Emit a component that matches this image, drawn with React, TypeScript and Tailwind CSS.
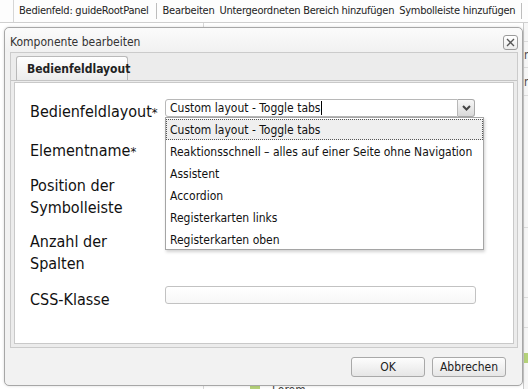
import React from 'react';

const font = { fontFamily: '"DejaVu Sans Condensed", "DejaVu Sans", sans-serif' };

const options = [
  'Custom layout - Toggle tabs',
  'Reaktionsschnell – alles auf einer Seite ohne Navigation',
  'Assistent',
  'Accordion',
  'Registerkarten links',
  'Registerkarten oben',
];

function Backdrop() {
  return (
    <div className="flex flex-col h-full">
      {/* Top toolbar of the page */}
      <div className="h-[23px] shrink-0 flex items-center border-b border-[#cfcfcf] bg-[#fdfdfd] text-[11px] tracking-[-0.25px] text-[#222] whitespace-nowrap">
        <div className="ml-[13px] h-[22px] border-l border-[#d6d6d6]" />
        <span className="ml-[5px]">Bedienfeld: guideRootPanel</span>
        <div className="ml-[7px] h-[16px] border-l border-[#bdbdbd]" />
        <span className="ml-[6px]">Bearbeiten</span>
        <span className="ml-[5px]">Untergeordneten Bereich hinzufügen</span>
        <span className="ml-[5px]">Symbolleiste hinzufügen</span>
        <div className="ml-[6px] h-[16px] border-l border-[#bdbdbd]" />
      </div>
      <div className="flex flex-1 min-h-0">
        <div className="w-[204px] shrink-0 border-r border-[#d8d8d8] bg-white" />
        <div className="flex-1 relative bg-white">
          <div className="absolute left-[46px] bottom-0 w-[10px] h-[4px] bg-[#b5d27a]" />
          <span className="absolute left-[68px] bottom-[-10px] text-[12px] text-[#444]">Lorem</span>
        </div>
        <div className="w-[5px] shrink-0 border-l border-[#c9c9c9] bg-[#f6f6f6] overflow-hidden text-[12px] text-[#4a4a4a] flex flex-col">
          <div className="h-[19px] border-b border-[#dcdcdc]" />
          <div className="h-[26px] leading-[26px] border-b border-[#dcdcdc]">m</div>
          <div className="h-[28px] leading-[28px] border-b border-[#dcdcdc]">m</div>
          <div className="h-[132px] border-b border-[#dcdcdc]" />
          <div className="h-[70px] border-b border-[#dcdcdc]" />
          <div className="h-[30px] border-b border-[#dcdcdc]" />
          <div className="h-[25px]" />
          <div className="h-[10px] bg-[#b5d27a]" />
        </div>
      </div>
    </div>
  );
}

function Combo() {
  return (
    <div className="relative flex w-[310px] h-[18px]">
      <div className="flex-1 flex items-center rounded-l-[3px] border border-[#b8b8b8] bg-white pl-[4px] text-[12px] text-[#111]">
        <span>Custom layout - Toggle tabs</span>
        <span className="w-px h-[14px] bg-black" />
      </div>
      <div className="w-[17px] flex items-center justify-center rounded-r-[3px] border border-l-0 border-[#a9a9a9] bg-gradient-to-b from-[#f7f7f7] to-[#d9d9d9]">
        <svg width="9" height="6" viewBox="0 0 9 6">
          <path d="M1 1 L4.5 4.5 L8 1" fill="none" stroke="#444" strokeWidth="2" />
        </svg>
      </div>
      {/* open list */}
      <div className="absolute left-0 top-[18px] w-[319px] h-[133px] border border-[#a5a5a5] bg-white shadow-[1px_2px_3px_rgba(0,0,0,0.18)] pt-px z-10">
        {options.map((o, i) => (
          <div
            key={o}
            className={`flex items-center text-[12px] text-[#111] whitespace-nowrap ${
              i === 0 ? 'h-[21px] bg-[#efefef] border border-dotted border-[#555] pl-[3px] mb-px' : 'h-[22px] pl-[4px]'
            }`}
          >
            {o}
          </div>
        ))}
      </div>
    </div>
  );
}

function Dialog() {
  return (
    <div className="absolute left-[4px] top-[27px] w-[519px] h-[359px] rounded-[5px] border border-[#a7a7a7] bg-[#f2f2f2] shadow-[0_0_3px_rgba(0,0,0,0.15)] flex flex-col">
      {/* Title */}
      <div className="h-[24px] shrink-0 flex items-center justify-between pl-[5px] pr-[4px] rounded-t-[5px] bg-gradient-to-b from-[#fbfbfb] to-[#f1f1f1] text-[12px] text-[#333]">
        <span className="mt-[3px]">Komponente bearbeiten</span>
        <div className="mt-[5px] w-[15px] h-[15px] rounded-[3px] border border-[#9a9a9a] bg-gradient-to-b from-white to-[#ececec] flex items-center justify-center">
          <svg width="9" height="9" viewBox="0 0 9 9">
            <path d="M1 1 L8 8 M8 1 L1 8" stroke="#555" strokeWidth="1.3" />
          </svg>
        </div>
      </div>

      {/* Tab panel */}
      <div className="ml-[5px] mr-[4px] h-[296px] shrink-0 border border-[#cbcbcb] bg-[#ececec] flex flex-col">
        <div className="h-[28px] shrink-0 flex items-end pl-[5px] border-b border-[#c4c4c4]">
          <div className="w-[112px] h-[24px] rounded-t-[3px] border border-b-0 border-[#b9b9b9] bg-gradient-to-b from-white to-[#ececec] flex items-center pl-[10px] text-[12px] font-bold text-[#222]">
            Bedienfeldlayout
          </div>
        </div>
        <div className="flex-1 mx-[3px] mb-[3px] mt-px border border-[#c9c9c9] bg-white pl-[15px] pt-[16px] text-[16px] leading-[22px] text-[#111]">
          <div className="flex items-start">
            <div className="w-[135px] pt-[2px]">Bedienfeldlayout<span className="text-[13px]">*</span></div>
            <Combo />
          </div>
          <div className="flex items-start mt-[16px]">
            <div className="w-[135px]">Elementname<span className="text-[13px]">*</span></div>
          </div>
          <div className="flex items-start mt-[12px]">
            <div className="w-[135px]">Position der<br />Symbolleiste</div>
          </div>
          <div className="flex items-start mt-[12px]">
            <div className="w-[135px]">Anzahl der<br />Spalten</div>
          </div>
          <div className="flex items-start mt-[11px]">
            <div className="w-[135px] pt-[3px]">CSS-Klasse</div>
            <div className="w-[311px] h-[18px] rounded-[3px] border border-[#c2c2c2] bg-gradient-to-b from-white to-[#f7f7f7]" />
          </div>
        </div>
      </div>

      {/* Footer */}
      <div className="flex-1 flex justify-end items-start pt-[9px] pr-[16px] gap-[7px]">
        <button className="w-[74px] h-[20px] rounded-[3px] border border-[#a9a9a9] bg-gradient-to-b from-[#fdfdfd] to-[#e6e6e6] text-[12px] text-[#222]">OK</button>
        <button className="w-[74px] h-[20px] rounded-[3px] border border-[#a9a9a9] bg-gradient-to-b from-[#fdfdfd] to-[#e6e6e6] text-[12px] text-[#222]">Abbrechen</button>
      </div>
    </div>
  );
}

export default function App() {
  return (
    <div className="relative w-[528px] h-[389px] overflow-hidden bg-white" style={font}>
      <Backdrop />
      <Dialog />
    </div>
  );
}
